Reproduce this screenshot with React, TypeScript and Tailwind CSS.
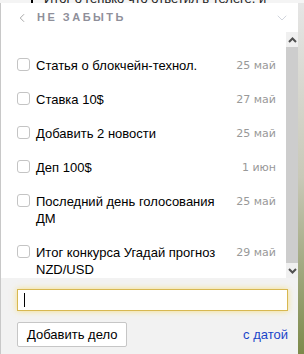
import { ChevronLeft, ChevronDown } from 'lucide-react';

interface Task {
  title: string;
  date: string;
}

const tasks: Task[] = [
  { title: 'Статья о блокчейн-технол.', date: '25 май' },
  { title: 'Ставка 10$', date: '27 май' },
  { title: 'Добавить 2 новости', date: '25 май' },
  { title: 'Деп 100$', date: '1 июн' },
  { title: 'Последний день голосования ДМ', date: '25 май' },
  { title: 'Итог конкурса Угадай прогноз NZD/USD', date: '29 май' },
];

function ScrollArrow({ up }: { up?: boolean }) {
  return (
    <svg width="9" height="6" viewBox="0 0 9 6" className={up ? '' : 'rotate-180'}>
      <path d="M1 5 L4.5 1.5 L8 5" fill="none" stroke="#505050" strokeWidth="2" />
    </svg>
  );
}

export default function App() {
  return (
    <div
      className="w-[304px] h-[354px] overflow-hidden relative bg-gradient-to-b from-[#e6e6e6] via-[#c9c9b8] to-[#7d8a4a]"
      style={{ fontFamily: '"Liberation Sans", Arial, sans-serif' }}
    >
      {/* page behind the popup, only its last pixels show */}
      <div className="h-[3px] overflow-hidden bg-[#f4f4f4] relative">
        <div className="absolute left-[44px] bottom-[-3px] text-[13px] leading-[15px] text-[#222] whitespace-nowrap">
          Итог о генько что ответил в телеге, и
        </div>
        <div className="absolute left-[31px] top-0 w-[2px] h-[3px] bg-black" />
      </div>

      <div className="w-[298px] h-[351px] bg-white border-l border-[#c8c8c8] flex flex-col">
        {/* header */}
        <div className="h-[29px] flex items-center pl-[14px] pr-[8px]">
          <ChevronLeft size={14} strokeWidth={1.5} className="text-[#9a9a9a]" />
          <span className="ml-[8px] text-[11px] font-bold tracking-[2.5px] text-[#8f8f9a]">НЕ ЗАБЫТЬ</span>
          <ChevronDown size={16} strokeWidth={1.25} className="ml-auto text-[#c8ccd6]" />
        </div>

        {/* list + scrollbar */}
        <div className="flex h-[246px]">
          <div className="flex-1 pt-[25px] overflow-hidden">
            {tasks.map((t, i) => (
              <div key={i} className="flex items-start pl-[16px] pr-[10px] pb-[17px]">
                <div className="w-[13px] h-[13px] mt-[1px] shrink-0 rounded-[3px] border border-[#c4c4c4] bg-white" />
                <div className="ml-[6px] flex-1 text-[13px] leading-[17px] text-black">{t.title}</div>
                <div
                  className="ml-[10px] shrink-0 text-[11px] leading-[17px] text-[#999]"
                  style={{ fontFamily: '"DejaVu Sans", Verdana, sans-serif' }}
                >
                  {t.date}
                </div>
              </div>
            ))}
          </div>
          <div className="w-[12px] flex flex-col bg-[#f0f0f0]">
            <div className="h-[15px] flex items-center justify-center">
              <ScrollArrow up />
            </div>
            <div className="flex-1 bg-[#cdcdcd]" />
            <div className="h-[15px] flex items-center justify-center">
              <ScrollArrow />
            </div>
          </div>
        </div>

        {/* footer */}
        <div className="flex-1 bg-[#f2f2f2] pl-[16px] pr-[10px] pt-[11px]">
          <div className="h-[22px] border border-[#d8b851] bg-white shadow-[0_0_6px_rgba(250,210,60,0.6)] flex items-center pl-[6px]">
            <div className="w-px h-[14px] bg-black" />
          </div>
          <div className="flex items-center justify-between mt-[11px]">
            <button className="h-[25px] px-[9px] bg-white border border-[#c6c6c6] rounded-[2px] text-[13px] text-black">
              Добавить дело
            </button>
            <span className="text-[13px] text-[#1a45c9]">с датой</span>
          </div>
        </div>
      </div>
    </div>
  );
}
